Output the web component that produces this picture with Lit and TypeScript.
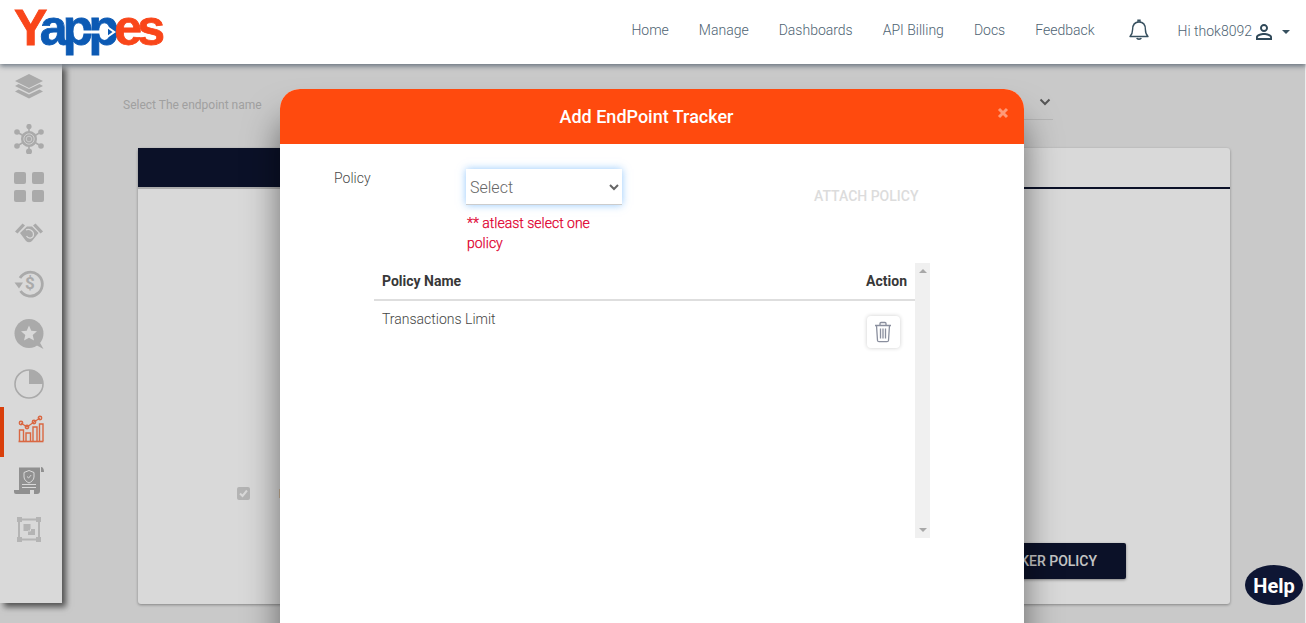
import { LitElement, html, css, svg } from "lit";
import { customElement } from "lit/decorators.js";
import { styleMap } from "lit/directives/style-map.js";

const G = "#c8c8c8";
const W = "#ffffff";
const O = "#ff7a4e";
const S = "#aaaaaa";
const L = "#d4d4d4";
const icons = [
  { gap: 7, icon: svg`<path d="M15 3 29 10 15 17 1 10Z" fill="${G}"/><path d="M4.5 13 1 15 15 22 29 15 25.5 13 15 18Z" fill="${G}"/><path d="M4.5 18.5 1 20.5 15 27.5 29 20.5 25.5 18.5 15 23.5Z" fill="${G}"/>` },
  { gap: 23, icon: svg`<g stroke="${G}" stroke-width="1.6"><path d="M15 1V29M3 8 27 22M27 8 3 22"/></g><g fill="${G}"><circle cx="15" cy="2.5" r="2.6"/><circle cx="15" cy="27.5" r="3"/><circle cx="3" cy="8" r="2.8"/><circle cx="27" cy="8" r="2.8"/><circle cx="3" cy="22" r="2.8"/><circle cx="27" cy="22" r="2.8"/><circle cx="15" cy="15" r="8"/></g><circle cx="15" cy="15" r="5.2" fill="none" stroke="${W}" stroke-width=".8"/><circle cx="15" cy="15" r="2.8" fill="none" stroke="${W}" stroke-width=".7"/>` },
  { gap: 18, icon: svg`<g fill="${G}"><rect x="0" y="0" width="12" height="12" rx="2"/><rect x="18" y="0" width="12" height="12" rx="2"/><rect x="0" y="18" width="12" height="12" rx="2"/><rect x="18" y="18" width="12" height="12" rx="2"/></g>` },
  { gap: 16, icon: svg`<g fill="${G}"><path d="M1 13.5 8.5 5.5 11 7.5 3.5 15.5Z"/><path d="M29 13.5 21.5 5.5 19 7.5 26.5 15.5Z"/><path d="M6 15 13 8.5H18L24.5 15 18 23Q15 25.5 12 23Z"/></g><path d="M12 12C15 10 20 13 19.5 17S14 21 12.5 18" fill="none" stroke="${W}" stroke-width="1.2"/>` },
  { gap: 21, icon: svg`<path d="M6 9A12 12 0 1 1 6.5 22" fill="none" stroke="${G}" stroke-width="2.8"/><path d="M.5 13.5H9L5 19.5Z" fill="${G}"/><text x="16" y="20" font-family="Roboto, sans-serif" font-size="17" font-weight="700" fill="${G}" text-anchor="middle">$</text>` },
  { gap: 20, icon: svg`<circle cx="15" cy="14.5" r="14.5" fill="${G}"/><path d="M22 26 29.5 30 25 22Z" fill="${G}"/><path d="M15 6.5 17.3 11.8 23 12.3 18.7 16 20 21.6 15 18.7 10 21.6 11.3 16 7 12.3 12.7 11.8Z" fill="${W}"/>` },
  { gap: 20, icon: svg`<circle cx="15" cy="15" r="14" fill="none" stroke="${G}" stroke-width="1.6"/><path d="M15 1A14 14 0 0 1 29 15H15Z" fill="${G}"/>` },
  { gap: 16, active: true, icon: svg`<g fill="none" stroke="${O}" stroke-width="1.4"><path d="M5.5 26V15H9.5V26M12 26V18H16.5V26M19 26V12H23V26M25.5 26V9H29V26"/><path d="M7 8 13 12 20 7 26 3" stroke-width="1.2"/><circle cx="7" cy="8" r="1.7"/><circle cx="13" cy="12" r="1.7"/><circle cx="20" cy="7" r="1.7"/><circle cx="26" cy="3" r="1.7"/></g><path d="M4.5 26.5H29.5" stroke="${O}" stroke-width="1.6"/>` },
  { gap: 20, icon: svg`<path d="M5 2.5H26V26Q26 29 23 29H20V25H5Z" fill="${S}"/><path d="M0 25H16V29H2Q0 29 0 27Z" fill="${S}"/><path d="M27 2C29 2 30 4 30 7H27Z" fill="${S}"/><path d="M15 5.5 20 7.5V12C20 15 17 17 15 18 13 17 10 15 10 12V7.5Z" fill="none" stroke="${W}" stroke-width="1"/><path d="M13 11.5 14.6 13 17.2 10" fill="none" stroke="${W}" stroke-width="1"/><path d="M8 19.5H22M8 22.5H22" stroke="${W}" stroke-width="1"/>` },
  { gap: 20, icon: svg`<g fill="${L}"><rect x="5" y="4.5" width="20" height="20" fill="none" stroke="${L}" stroke-width="2"/><rect x="3" y="2" width="5" height="5"/><rect x="22" y="2" width="5" height="5"/><rect x="3" y="22" width="5" height="5"/><rect x="22" y="22" width="5" height="5"/><rect x="9.5" y="9" width="7" height="7"/><rect x="14" y="14" width="7" height="6"/></g><path d="M16.5 14V16H14" fill="none" stroke="${W}" stroke-width="1"/>` },
];

@customElement("app-root")
export class AppRoot extends LitElement {
  static styles = css`
    :host {
      display: block;
      position: relative;
      height: 623px;
      overflow: hidden;
      background: #fff;
      font-family: Roboto, sans-serif;
      font-size: 14px;
    }
    .header {
      position: relative;
      z-index: 3;
      height: 64px;
      display: flex;
      align-items: center;
      background: #fff;
      box-shadow: 0 2px 5px rgba(20, 40, 60, 0.55);
      padding-left: 14px;
      padding-right: 16px;
      color: #4e6372;
      font-weight: 300;
    }
    .logo {
      position: relative;
      width: 150px;
      height: 64px;
      font-family: "Liberation Sans", sans-serif;
      font-weight: 700;
      font-size: 50px;
      line-height: 57px;
      letter-spacing: -4.8px;
      white-space: nowrap;
      -webkit-text-stroke: 0.8px currentColor;
    }
    .logo .o { color: #f9461a; }
    .logo .b { color: #0c5ab4; }
    .arrow { position: absolute; left: 60px; top: 22px; }
    nav { margin-left: auto; margin-top: -4px; display: flex; gap: 30px; }
    .bell { margin-left: 34px; display: flex; margin-top: -5px; }
    .hi { margin-left: 29px; margin-top: -2px; }
    .user { display: flex; }
    .caret {
      margin-left: 6px;
      border-left: 4px solid transparent;
      border-right: 4px solid transparent;
      border-top: 4px solid #37505f;
    }
    .page { display: flex; height: 559px; background: #ededed; }
    .side {
      position: relative;
      width: 62px;
      height: 539px;
      flex: none;
      background: #fff;
      box-shadow: 4px 4px 6px rgba(0, 0, 0, 0.6);
      display: flex;
      flex-direction: column;
      align-items: flex-start;
    }
    .item { position: relative; margin-left: 14px; width: 30px; height: 30px; display: flex; }
    .item.active::before {
      content: "";
      position: absolute;
      left: -14px;
      top: -8px;
      width: 4px;
      height: 50px;
      background: #ff4a0e;
    }
    .main { flex: 1; padding: 24px 76px 0; }
    .pick { display: flex; align-items: center; height: 32px; margin: 0 177px 28px -15px; }
    .pick label { font-size: 12px; color: #bcbcbc; font-weight: 400; width: 160px; padding-top: 2px; }
    .pick .sel {
      flex: 1;
      height: 31px;
      border-bottom: 1px solid #d5d5d5;
      display: flex;
      justify-content: flex-end;
      align-items: center;
      padding-right: 2px;
      padding-bottom: 3px;
      box-sizing: border-box;
    }
    .card {
      height: 456px;
      background: #fff;
      border-radius: 3px;
      box-shadow: 0 1px 3px rgba(0, 0, 0, 0.35);
      display: flex;
      flex-direction: column;
    }
    .tabs { display: flex; height: 41px; flex: none; }
    .tab { width: 320px; background: #0d1530; border-bottom: 2px solid #ccc; }
    .rest { flex: 1; border-bottom: 2px solid #0d1530; }
    .check {
      display: flex;
      align-items: center;
      margin: 298px 0 0 99px;
      height: 13px;
    }
    .box {
      width: 13px;
      height: 13px;
      border-radius: 2px;
      background: #d4d4d4;
      display: flex;
    }
    .peek { width: 2px; height: 9px; margin-left: 29px; background: #f0d8b8; }
    .btn {
      align-self: flex-end;
      margin: 43px 104px 0 0;
      width: 300px;
      height: 36px;
      box-sizing: border-box;
      padding-right: 29px;
      border-radius: 2px;
      background: #0d1530;
      color: #e8e8e8;
      font-weight: 500;
      font-size: 14px;
      line-height: 36px;
      text-align: right;
      box-shadow: 0 1px 3px rgba(0, 0, 0, 0.4);
    }
    .overlay {
      position: absolute;
      left: 0;
      top: 0;
      right: 1px;
      bottom: 0;
      z-index: 1;
      background: rgba(0, 0, 0, 0.15);
    }
    .modal {
      position: absolute;
      z-index: 2;
      left: 280px;
      top: 89px;
      width: 744px;
      height: 600px;
      background: #fff;
      border-radius: 20px 20px 0 0;
      box-shadow: 0 30px 35px rgba(0, 0, 0, 0.5);
    }
    .mhead {
      position: relative;
      height: 55px;
      box-sizing: border-box;
      padding-right: 11px;
      border-radius: 20px 20px 0 0;
      background: #ff4a0e;
      color: #fff;
      font-weight: 500;
      font-size: 18px;
      line-height: 55px;
      text-align: center;
    }
    .close {
      position: absolute;
      right: 15px;
      top: 18px;
      width: 12px;
      height: 12px;
      display: flex;
    }
    .form { display: flex; padding: 24px 0 0 54px; height: 95px; box-sizing: border-box; }
    .form > label { width: 132px; color: #4a4a4a; font-weight: 300; line-height: 20px; flex: none; }
    .field { width: 157px; flex: none; padding-top: 1px; }
    select {
      display: block;
      width: 156px;
      height: 36px;
      box-sizing: border-box;
      border: none;
      border-bottom: 1px solid #ccc;
      background: #fff;
      outline: none;
      font-family: Roboto, sans-serif;
      font-size: 16px;
      font-weight: 300;
      color: #666;
      box-shadow: 0 0 8px rgba(90, 170, 250, 0.65);
      padding: 2px 0 0;
    }
    .err { margin-top: 8px; color: #e0002f; line-height: 20px; font-weight: 300; padding-left: 1px; width: 150px; -webkit-text-stroke: 0.25px #e0002f; }
    .attach {
      margin: 19px 0 0 191px;
      color: #dcdcdc;
      font-weight: 500;
      font-size: 14px;
      line-height: 18px;
      white-space: nowrap;
    }
    .tablewrap { display: flex; margin: 24px 0 0 94px; width: 556px; height: 275px; }
    .table { flex: 1; }
    .thead {
      display: flex;
      justify-content: space-between;
      padding: 0 8px;
      height: 36px;
      line-height: 36px;
      border-bottom: 2px solid #dedede;
      font-weight: 700;
      color: #383838;
    }
    .row { display: flex; justify-content: space-between; padding: 9px 15px 0 8px; color: #444; font-weight: 300; line-height: 18px; }
    .trash {
      width: 33px;
      height: 32px;
      margin-top: 6px;
      border-radius: 4px;
      background: #fff;
      box-shadow: 0 0 4px rgba(0, 0, 0, 0.2);
      display: flex;
      align-items: center;
      justify-content: center;
      padding-right: 1px;
      box-sizing: border-box;
    }
    .scroll {
      width: 15px;
      background: #f0f0f0;
      display: flex;
      flex-direction: column;
      justify-content: space-between;
      align-items: center;
      padding: 6px 0;
      box-sizing: border-box;
    }
    .up { border: 4px solid transparent; border-top: none; border-bottom: 4px solid #a8a8a8; }
    .down { border: 4px solid transparent; border-bottom: none; border-top: 4px solid #a8a8a8; }
    .help {
      position: absolute;
      z-index: 3;
      right: 3px;
      top: 565px;
      width: 58px;
      height: 40px;
      border-radius: 50%;
      background: #0e1634;
      color: #fff;
      font-weight: 700;
      font-size: 20px;
      line-height: 42px;
      text-align: center;
    }
  `;

  render() {
    return html`
      <div class="header">
        <div class="logo">
          <span class="o">Y</span><span class="b">app</span><span class="o">es</span>
          <svg class="arrow" width="46" height="20" viewBox="0 0 46 20">
            <path d="M0 8.5H32V3L42 10 32 17V11.5H0Z" fill="#fff"/>
            <path d="M34 6.8 38.5 10 34 13.2Z" fill="#0c5ab4"/>
          </svg>
        </div>
        <nav>
          <span>Home</span><span>Manage</span><span>Dashboards</span><span>API Billing</span><span>Docs</span><span>Feedback</span>
        </nav>
        <span class="bell">
          <svg width="20" height="22" viewBox="0 0 20 22" fill="none" stroke="#37505f" stroke-width="1.4">
            <path d="M1 17.5C3 15.5 3.6 14 3.6 10.5 3.6 6 6 3 10 3S16.4 6 16.4 10.5C16.4 14 17 15.5 19 17.5Z" stroke-linejoin="round"/>
            <path d="M9 3V1.2H11V3"/>
            <path d="M7.8 19C8.3 20.5 11.7 20.5 12.2 19" stroke-width="1.6"/>
          </svg>
        </span>
        <span class="hi">Hi thok8092</span>
        <span class="user">
          <svg width="24" height="24" viewBox="0 0 24 24" fill="#2f4858"><path d="M12 5.9a2.1 2.1 0 1 1 0 4.2 2.1 2.1 0 0 1 0-4.2m0 9c2.97 0 6.1 1.46 6.1 2.1v1.1H5.9V17c0-.64 3.13-2.1 6.1-2.1M12 4C9.79 4 8 5.79 8 8s1.79 4 4 4 4-1.79 4-4-1.79-4-4-4zm0 9c-2.67 0-8 1.34-8 4v3h16v-3c0-2.66-5.33-4-8-4z"/></svg>
        </span>
        <span class="caret"></span>
      </div>
      <div class="page">
        <aside class="side">
          ${icons.map(
            (i) => html`<div class="item ${i.active ? "active" : ""}" style=${styleMap({ marginTop: i.gap + "px" })}>
              <svg width="30" height="30" viewBox="0 0 30 30">${i.icon}</svg>
            </div>`
          )}
        </aside>
        <main class="main">
          <div class="pick">
            <label>Select The endpoint name</label>
            <div class="sel">
              <svg width="12" height="8" viewBox="0 0 12 8" fill="none" stroke="#666" stroke-width="2"><path d="M1.5 1.5 6 6 10.5 1.5"/></svg>
            </div>
          </div>
          <section class="card">
            <div class="tabs"><div class="tab"></div><div class="rest"></div></div>
            <div class="check">
              <span class="box">
                <svg width="13" height="13" viewBox="0 0 13 13" fill="none" stroke="#fff" stroke-width="2"><path d="M3 6.5 5.5 9 10 3.5"/></svg>
              </span>
              <span class="peek"></span>
            </div>
            <div class="btn">ADD TRACKER POLICY</div>
          </section>
        </main>
      </div>
      <div class="overlay"></div>
      <div class="modal">
        <div class="mhead">
          Add EndPoint Tracker
          <span class="close">
            <svg width="12" height="12" viewBox="0 0 12 12" stroke="#ff9a78" stroke-width="3"><path d="M2 2 10 10M10 2 2 10"/></svg>
          </span>
        </div>
        <div class="form">
          <label>Policy</label>
          <div class="field">
            <select><option>Select</option></select>
            <div class="err">** atleast select one policy</div>
          </div>
          <div class="attach">ATTACH POLICY</div>
        </div>
        <div class="tablewrap">
          <div class="table">
            <div class="thead"><span>Policy Name</span><span>Action</span></div>
            <div class="row">
              <span>Transactions Limit</span>
              <span class="trash">
                <svg width="18" height="22" viewBox="0 0 18 22" fill="none" stroke="#8a8f9e" stroke-width="1.3">
                  <path d="M1 4.5H17M6 4.5V2.5Q6 1.5 7 1.5H11Q12 1.5 12 2.5V4.5"/>
                  <path d="M2.5 4.5 3.5 19.5Q3.6 20.7 5 20.7H13Q14.4 20.7 14.5 19.5L15.5 4.5"/>
                  <path d="M6.5 7.5V17.5M9 7.5V17.5M11.5 7.5V17.5"/>
                </svg>
              </span>
            </div>
          </div>
          <div class="scroll"><span class="up"></span><span class="down"></span></div>
        </div>
      </div>
      <div class="help">Help</div>
    `;
  }
}
